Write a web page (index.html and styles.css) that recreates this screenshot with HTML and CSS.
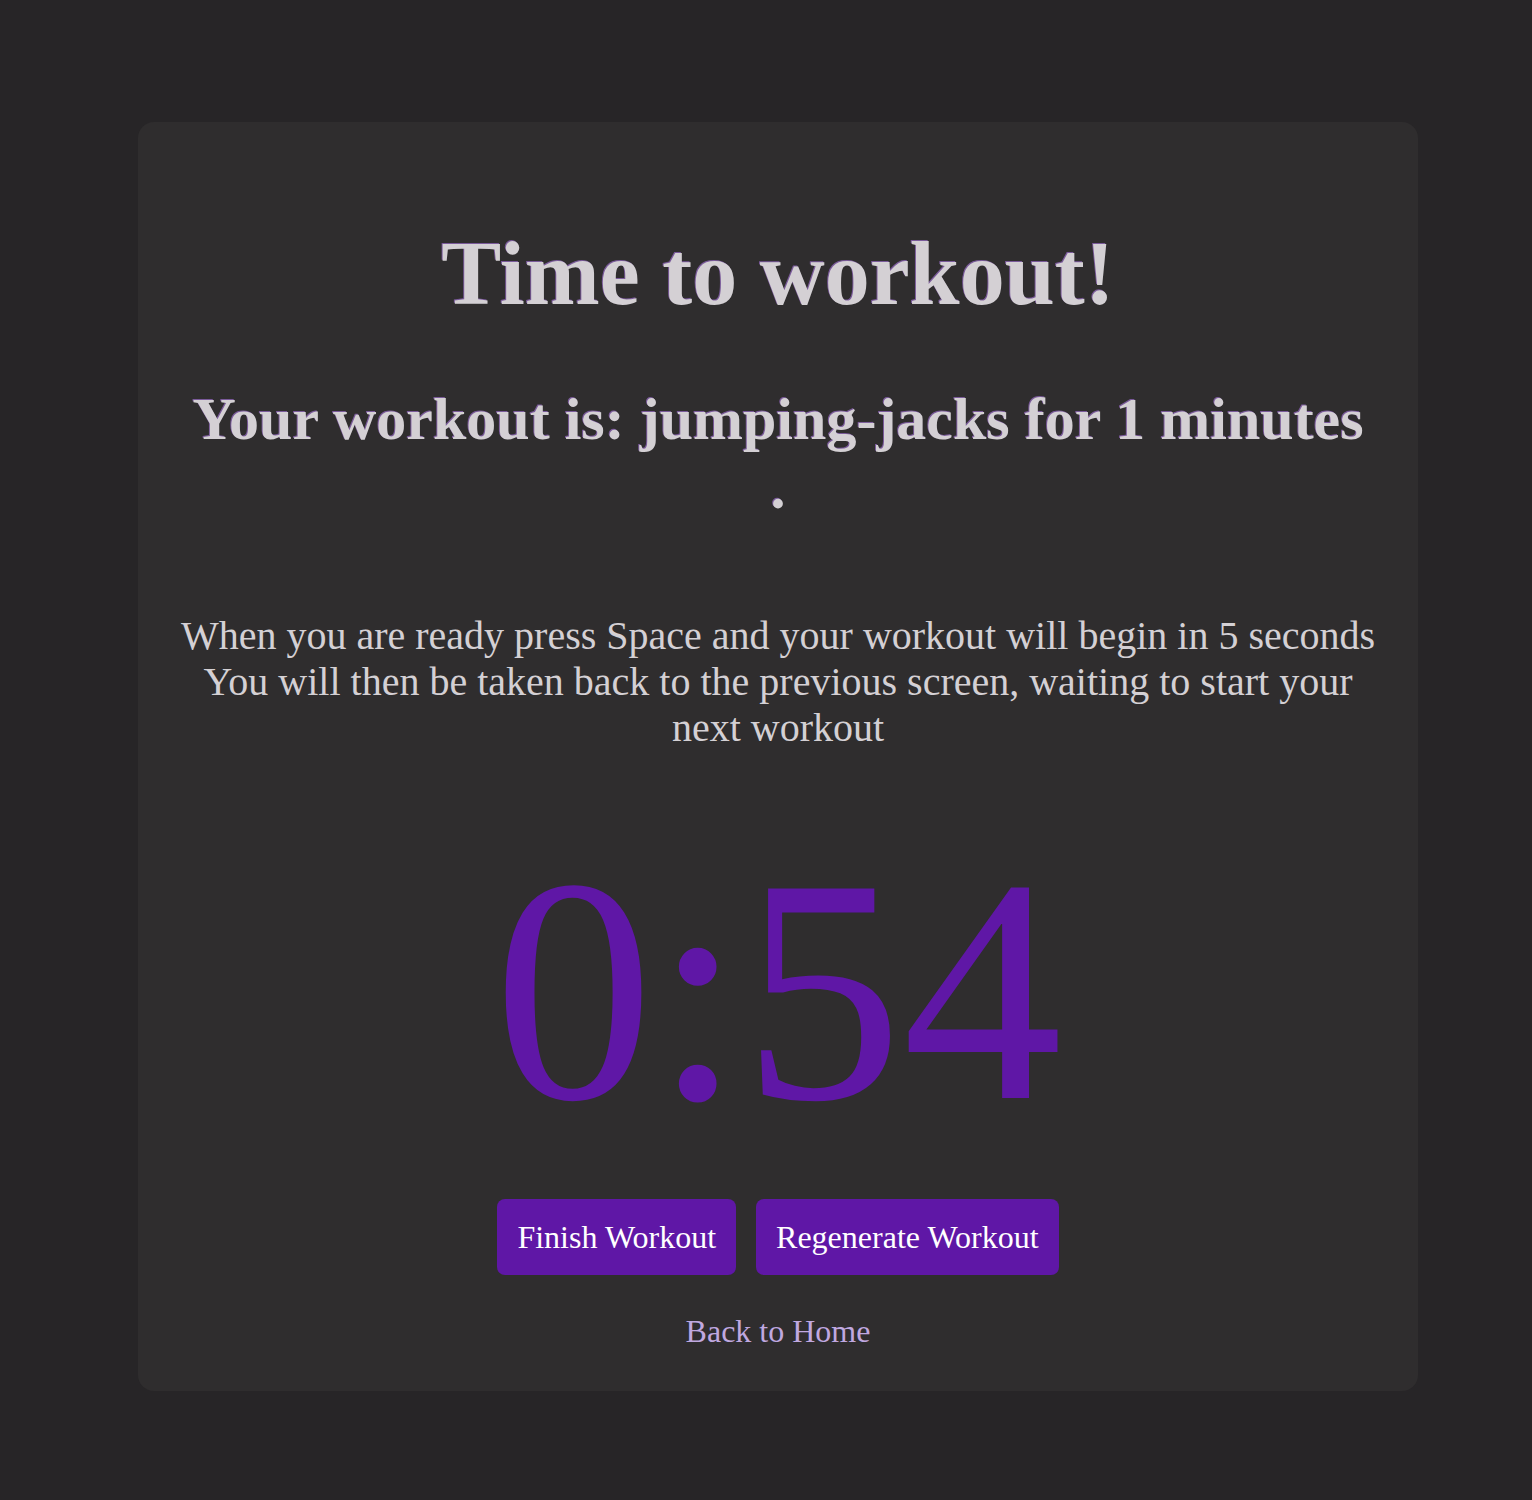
FILE: index.html
```html
<!DOCTYPE html>
<html>
<head>
<meta charset="utf-8">
<link rel="stylesheet" href="styles.css">
</head>
<body>
<div class="page">
  <main class="card">
    <h1 class="title">Time to workout!</h1>
    <h2 class="workout">Your workout is: jumping-jacks for 1 minutes<br>.</h2>
    <p class="info">When you are ready press Space and your workout will begin in 5 seconds<br>You will then be taken back to the previous screen, waiting to start your<br>next workout</p>
    <div class="timer">0:54</div>
    <div class="actions">
      <button class="btn">Finish Workout</button>
      <button class="btn">Regenerate Workout</button>
    </div>
    <a class="back" href="#">Back to Home</a>
  </main>
</div>
</body>
</html>
```
FILE: styles.css
```css
html, body {
  margin: 0;
  padding: 0;
  background: #272527;
}
body {
  font-family: "Liberation Serif", "Times New Roman", serif;
}
.page {
  padding: 122px 0 110px 138px;
}
.card {
  width: 1280px;
  box-sizing: border-box;
  background: #2f2d2e;
  border-radius: 16px;
  padding: 100px 40px 41px;
  display: flex;
  flex-direction: column;
  align-items: center;
  text-align: center;
}
.title {
  margin: 0;
  font-size: 90px;
  font-weight: bold;
  color: #d4d0d4;
  text-shadow: -1px -1px 0 #7a5a9a;
}
.workout {
  margin: 60px 0 0;
  font-size: 60px;
  font-weight: bold;
  color: #d4d0d4;
  text-shadow: -1px -1px 0 #7a5a9a;
  line-height: 1.15;
}
.info {
  margin: 90px 0 0;
  font-size: 40px;
  line-height: 46px;
  color: #d4d0d4;
}
.timer {
  margin-top: 55px;
  font-size: 320px;
  line-height: 1.15;
  color: #5f17a6;
}
.actions {
  display: flex;
  gap: 20px;
  margin-top: 25px;
}
.btn {
  font-family: "Liberation Serif", "Times New Roman", serif;
  font-size: 32px;
  color: #ffffff;
  background: #5f17a6;
  border: none;
  border-radius: 8px;
  padding: 20px 20px 19px;
  line-height: 37px;
}
.back {
  margin-top: 38px;
  font-size: 32px;
  color: #c0a8e0;
  text-decoration: none;
}
```
